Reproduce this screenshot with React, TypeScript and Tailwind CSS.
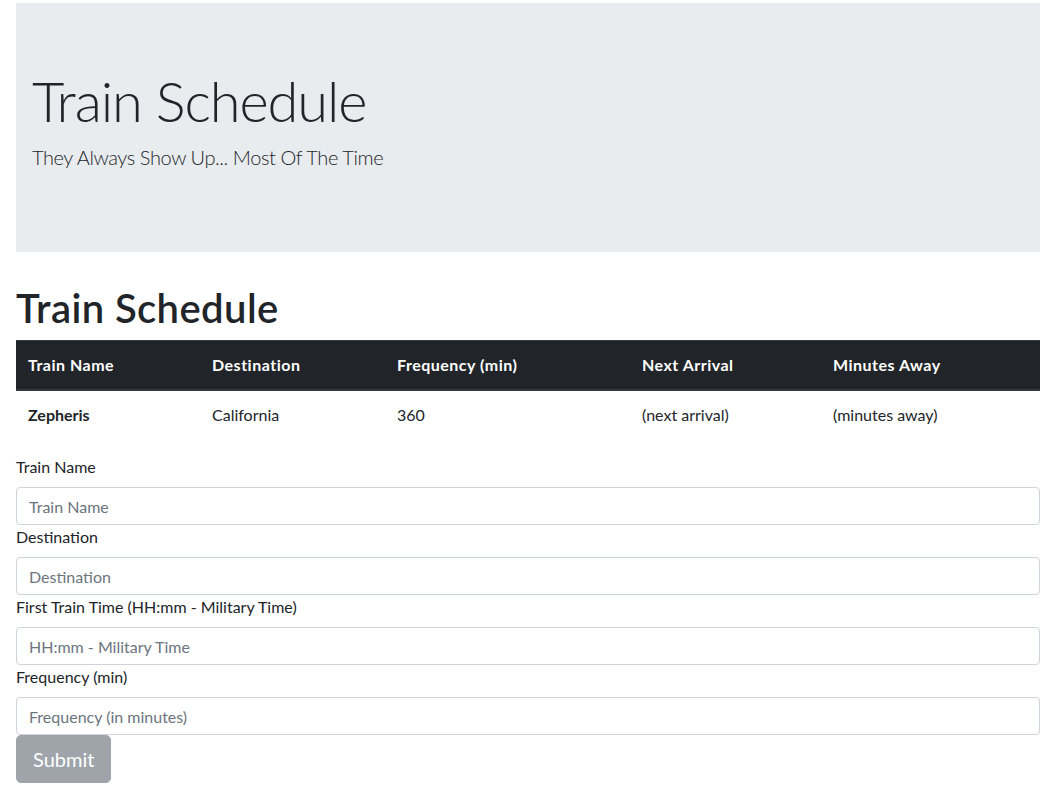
export default function App() {
  const headers = [
    { t: "Train Name", w: "w-[184px]" },
    { t: "Destination", w: "w-[185px]" },
    { t: "Frequency (min)", w: "w-[245px]" },
    { t: "Next Arrival", w: "w-[191px]" },
    { t: "Minutes Away", w: "" },
  ];
  const fields = [
    { label: "Train Name", ph: "Train Name" },
    { label: "Destination", ph: "Destination" },
    { label: "First Train Time (HH:mm - Military Time)", ph: "HH:mm - Military Time" },
    { label: "Frequency (min)", ph: "Frequency (in minutes)" },
  ];
  return (
    <div className="min-h-[795px] bg-white pt-[3px] pl-4 pr-[17px] font-['Lato',sans-serif] text-base leading-6 text-[#212529]">
      <div className="bg-[#e9ecef] px-4 pt-16 pb-16">
        <h1 className="mb-2 text-[56px] leading-[67px] font-light tracking-[-1.1px]">Train Schedule</h1>
        <p className="mb-4 text-[20px] leading-[30px] font-light tracking-[-0.42px]">
          They Always Show Up... Most Of The Time
        </p>
      </div>

      <h2 className="mt-8 mb-2 text-[40px] leading-[48px] font-semibold tracking-[0.4px]">Train Schedule</h2>

      <table className="mb-4 w-full table-fixed border-collapse">
        <thead>
          <tr>
            {headers.map((h) => (
              <th
                key={h.t}
                className={`${h.w} border-t border-b-2 border-t-[#32383e] border-b-[#32383e] bg-[#212529] p-3 text-left font-bold tracking-[0.5px] text-white`}
              >
                {h.t}
              </th>
            ))}
          </tr>
        </thead>
        <tbody>
          <tr>
            <th className="border-t border-[#dee2e6] p-3 text-left font-bold">Zepheris</th>
            <td className="border-t border-[#dee2e6] p-3">California</td>
            <td className="border-t border-[#dee2e6] p-3">360</td>
            <td className="border-t border-[#dee2e6] p-3">(next arrival)</td>
            <td className="border-t border-[#dee2e6] p-3">(minutes away)</td>
          </tr>
        </tbody>
      </table>

      <form className="flex flex-col">
        {fields.map((f) => (
          <div key={f.label} className="flex flex-col">
            <label className="mb-2">{f.label}</label>
            <input
              type="text"
              placeholder={f.ph}
              className="h-[38px] w-full rounded border border-[#ced4da] bg-white px-3 py-1.5 text-base text-[#495057] placeholder:text-[#6c757d] outline-none"
            />
          </div>
        ))}
        <div>
          <button
            type="button"
            disabled
            className="rounded-[5px] border border-[#6c757d] bg-[#6c757d] px-4 py-2 text-[20px] leading-[30px] text-white opacity-65"
          >
            Submit
          </button>
        </div>
      </form>
    </div>
  );
}
